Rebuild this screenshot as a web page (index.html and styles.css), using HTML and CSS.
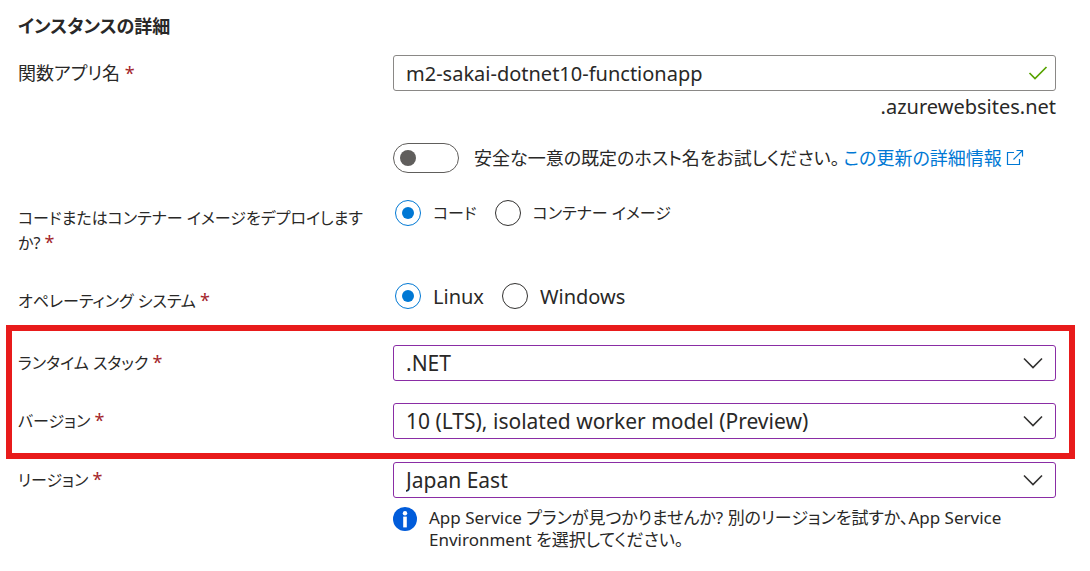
FILE: index.html
```html
<!DOCTYPE html>
<html lang="ja">
<head>
    <meta charset="UTF-8">
    <meta name="viewport" content="width=device-width, initial-scale=1.0">
    <title>インスタンスの詳細</title>
    <link rel="stylesheet" href="styles.css">
</head>
<body>
    <form class="details">
        <h2 class="title">インスタンスの詳細</h2>

        <div class="row">
            <label class="label" for="app-name">関数アプリ名 <span class="required">*</span></label>
            <div class="field">
                <div class="control">
                    <input class="box" type="text" id="app-name" value="m2-sakai-dotnet10-functionapp">
                    <svg class="icon check" width="20" height="16" viewBox="0 0 20 16">
                        <path d="M1.5 8L7 13.5L18.5 2"/>
                    </svg>
                </div>
                <div class="suffix">.azurewebsites.net</div>
                <div class="toggle-row">
                    <input class="toggle" type="checkbox" role="switch" id="unique-host">
                    <label for="unique-host">安全な一意の既定のホスト名をお試しください。</label>
                    <a class="link" href="#">この更新の詳細情報
                        <svg width="18" height="18" viewBox="0 0 18 18">
                            <path d="M8 3.5H1.5V15.5H13.5V10M10.5 1.5H16.5V7.5M16.5 1.5L7.5 10.5"/>
                        </svg>
                    </a>
                </div>
            </div>
        </div>

        <!-- デプロイ方法 -->
        <div class="row row-deploy" role="radiogroup" aria-labelledby="deploy-label">
            <div class="label kana" id="deploy-label">コードまたはコンテナー イメージをデプロイしますか? <span class="required">*</span></div>
            <div class="radios kana">
                <label class="radio"><input type="radio" name="deploy" checked>コード</label>
                <label class="radio"><input type="radio" name="deploy">コンテナー イメージ</label>
            </div>
        </div>

        <!-- OS -->
        <div class="row row-os" role="radiogroup" aria-labelledby="os-label">
            <div class="label kana" id="os-label">オペレーティング システム <span class="required">*</span></div>
            <div class="radios latin">
                <label class="radio"><input type="radio" name="os" checked>Linux</label>
                <label class="radio"><input type="radio" name="os">Windows</label>
            </div>
        </div>

        <div class="highlight">
            <div class="row">
                <label class="label kana" for="runtime">ランタイム スタック <span class="required">*</span></label>
                <div class="control">
                    <select class="box" id="runtime"><option>.NET</option></select>
                    <svg class="icon chevron" width="20" height="12" viewBox="0 0 20 12"><path d="M1 1.5L10 10.5L19 1.5"/></svg>
                </div>
            </div>
            <div class="row">
                <label class="label kana" for="version">バージョン <span class="required">*</span></label>
                <div class="control">
                    <select class="box" id="version"><option>10 (LTS), isolated worker model (Preview)</option></select>
                    <svg class="icon chevron" width="20" height="12" viewBox="0 0 20 12"><path d="M1 1.5L10 10.5L19 1.5"/></svg>
                </div>
            </div>
        </div>

        <div class="row">
            <label class="label kana" for="region">リージョン <span class="required">*</span></label>
            <div class="field">
                <div class="control">
                    <select class="box" id="region"><option>Japan East</option></select>
                    <svg class="icon chevron" width="20" height="12" viewBox="0 0 20 12"><path d="M1 1.5L10 10.5L19 1.5"/></svg>
                </div>
                <div class="info">
                    <svg class="info-icon" width="24" height="24" viewBox="0 0 24 24">
                        <circle cx="12" cy="12" r="12" fill="#015cda"/>
                        <circle cx="12" cy="6.2" r="2.2" fill="#fff"/>
                        <rect x="10.2" y="9.6" width="3.6" height="10.8" fill="#fff"/>
                    </svg>
                    <p>App Service プランが見つかりませんか? 別のリージョンを試すか、App Service Environment を選択してください。</p>
                </div>
            </div>
        </div>
    </form>
</body>
</html>
```
FILE: styles.css
```css
* {
    box-sizing: border-box;
}

body {
    margin: 0;
    background-color: #fff;
    color: #292827;
    font-family: "Noto Sans", "Noto Sans CJK JP", sans-serif;
    font-size: 18px;
    line-height: 25px;
    font-feature-settings: "palt";
}

.details {
    padding: 13px 34px 16px 18px;
}

.title {
    margin: 0 0 16px;
    font-size: 18px;
    line-height: 26px;
    font-weight: 700;
}

.row {
    display: grid;
    grid-template-columns: 375px minmax(0, 1fr);
    align-items: start;
}

.label {
    padding: 6px 20px 0 0;
}

.kana {
    font-size: 16px;
}

.required {
    color: #a4262c;
    font-size: 18px;
    line-height: 18px;
}

.control {
    display: grid;
    align-items: center;
}

.box {
    grid-area: 1 / 1;
    width: 100%;
    height: 36px;
    margin: 0;
    padding: 0 48px 0 12px;
    border: 1px solid #8a8886;
    border-radius: 3px;
    background-color: #fff;
    color: inherit;
    font-family: inherit;
    font-size: 20px;
    appearance: none;
}

select.box {
    border-color: #8a2da5;
    font-size: 21px;
}

.icon {
    grid-area: 1 / 1;
    justify-self: end;
    fill: none;
    pointer-events: none;
}

.check {
    margin-right: 8px;
    stroke: #57a300;
    stroke-width: 1.7;
}

.chevron {
    margin-right: 13px;
    stroke: #323130;
    stroke-width: 1.6;
}

.suffix {
    font-size: 20px;
    line-height: 32px;
    text-align: right;
}

.toggle-row {
    display: flex;
    align-items: center;
    margin-top: 20px;
}

.toggle {
    display: flex;
    align-items: center;
    flex-shrink: 0;
    width: 66px;
    height: 30px;
    margin: 0 15px 0 0;
    padding: 0 6px;
    border: 1px solid #605e5c;
    border-radius: 15px;
    appearance: none;
}

.toggle::before {
    content: "";
    width: 16px;
    height: 16px;
    border-radius: 50%;
    background-color: #605e5c;
}

.toggle:checked {
    justify-content: flex-end;
}

.link {
    display: flex;
    align-items: center;
    gap: 4px;
    margin-left: 4px;
    color: #0078d4;
    text-decoration: none;
}

.link svg {
    fill: none;
    stroke: #0078d4;
    stroke-width: 1.2;
}

.row-deploy {
    margin-top: 27px;
}

.row-os {
    margin-top: 27px;
}

.radios {
    display: flex;
    gap: 18px;
    padding-left: 2px;
}

.radio {
    display: flex;
    align-items: center;
    gap: 12px;
}

.radio input {
    display: grid;
    place-items: center;
    width: 26px;
    height: 26px;
    margin: 0;
    border: 1px solid #323130;
    border-radius: 50%;
    appearance: none;
}

.radio input:checked {
    border-color: #0078d4;
}

.radio input:checked::before {
    content: "";
    width: 12px;
    height: 12px;
    border-radius: 50%;
    background-color: #0078d4;
}

.latin {
    font-size: 20px;
}

.highlight {
    display: grid;
    gap: 22px;
    margin: 11px -19px 3px -12px;
    padding: 14px 13px 14px 6px;
    border: 6px solid #e81b1b;
}

.info {
    display: flex;
    gap: 12px;
    margin-top: 9px;
    font-size: 17px;
    line-height: 22px;
}

.info-icon {
    flex-shrink: 0;
}

.info p {
    margin: 0;
}
```
